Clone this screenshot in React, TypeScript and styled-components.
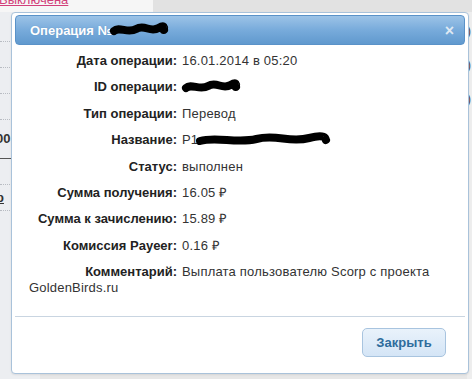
import styled, { createGlobalStyle } from "styled-components";

const GlobalStyle = createGlobalStyle`
  html, body {
    margin: 0;
    padding: 0;
    background: #e7e7e7;
  }
  body {
    font-family: "Liberation Sans", Arial, sans-serif;
    font-size: 13px;
    color: #222;
  }
`;

const Page = styled.div`
  position: relative;
  width: 472px;
  height: 379px;
  overflow: hidden;
  display: flex;
  flex-direction: column;
`;

const TopStrip = styled.div`
  display: flex;
  height: 12px;
  flex: none;
`;

const TopCell = styled.div<{ $width?: number; $bg: string }>`
  width: ${(p) => (p.$width ? `${p.$width}px` : "auto")};
  flex: ${(p) => (p.$width ? "none" : "1")};
  background: ${(p) => p.$bg};
  overflow: hidden;
`;

const OffLink = styled.a`
  display: block;
  margin-top: -8px;
  margin-left: -1px;
  color: #d23f7a;
  font-size: 13px;
  line-height: 16px;
  text-decoration: underline;
`;

const Backdrop = styled.div`
  flex: 1;
  display: flex;
  justify-content: space-between;
`;

const SideColumn = styled.div`
  width: 40px;
  background: #eceef1;
  padding-top: 4px;
`;

const SideRow = styled.div<{ $solid?: boolean; $tall?: boolean }>`
  height: ${(p) => (p.$tall ? 38 : 25)}px;
  border-bottom: 1px ${(p) => (p.$solid ? "solid #555" : "dotted #b8bcc2")};
  font-size: 13px;
  font-weight: bold;
  line-height: ${(p) => (p.$tall ? 38 : 25)}px;
  color: #333;
  overflow: hidden;
  white-space: nowrap;
`;

const SideText = styled.span<{ $link?: boolean }>`
  display: inline-block;
  margin-left: -4px;
  text-decoration: ${(p) => (p.$link ? "underline" : "none")};
`;

const EdgeColumn = styled.div`
  width: 5px;
  background: #eeeeee;
  padding-top: 2px;
  font-size: 12px;
  line-height: 34px;
  color: #444;
  overflow: hidden;
`;

const Dialog = styled.div`
  position: absolute;
  left: 11px;
  top: 12px;
  width: 450px;
  height: 355px;
  padding: 2px 3px 3px;
  background: #fff;
  border: 1px solid #a9c2da;
  border-radius: 4px;
  display: flex;
  flex-direction: column;
  box-shadow: 0 1px 2px rgba(0, 0, 0, 0.08);
`;

const TitleBar = styled.div`
  height: 28px;
  flex: none;
  display: flex;
  align-items: center;
  justify-content: space-between;
  padding: 0 10px 0 14px;
  background: linear-gradient(#9cc3e7, #78abdb 50%, #6099ce);
  border: 1px solid #5a92c8;
  border-radius: 4px;
  color: #fff;
  font-weight: bold;
  font-size: 13px;
`;

const Title = styled.span`
  display: flex;
  align-items: center;
  text-shadow: 0 0 1px rgba(40, 80, 130, 0.3);
`;

const Scribble = styled.svg`
  display: inline-block;
  vertical-align: -1px;
  overflow: visible;
`;

const CloseButton = styled.span`
  color: #dfe9f3;
  font-size: 16px;
  font-weight: bold;
  line-height: 1;
  margin-top: 2px;
`;

const Content = styled.div`
  flex: 1;
  padding: 3px 14px 0;
`;

const Row = styled.div`
  padding: 5px 0 5.4px;
  line-height: 16px;
`;

const Label = styled.span`
  display: inline-block;
  width: 148px;
  text-align: right;
  font-weight: bold;
  color: #222;
`;

const Value = styled.span`
  margin-left: 5px;
  color: #333;
  letter-spacing: 0.2px;
`;

const ButtonPane = styled.div`
  flex: none;
  border-top: 1px solid #c9d5e1;
  display: flex;
  justify-content: flex-end;
  padding: 11px 19px 13px 0;
`;

const Button = styled.button`
  width: 84px;
  height: 29px;
  background: linear-gradient(#e9f2fb, #d4e5f6);
  border: 1px solid #a8c4df;
  border-radius: 5px;
  color: #2e6c9c;
  font-family: "Liberation Sans", Arial, sans-serif;
  font-size: 13px;
  font-weight: bold;
  cursor: pointer;
`;

function Blot({ width, offset = 0 }: { width: number; offset?: number }) {
  const w = width;
  return (
    <Scribble
      width={w}
      height="10"
      viewBox={`0 0 ${w} 10`}
      style={{ marginLeft: offset }}
    >
      <path
        d={`M3 6 C ${w * 0.15} 1, ${w * 0.3} 9, ${w * 0.45} 4 S ${
          w * 0.7
        } 8, ${w * 0.85} 3 S ${w - 4} 6, ${w - 3} 5`}
        stroke="#000"
        strokeWidth="8"
        strokeLinecap="round"
        strokeLinejoin="round"
        fill="none"
      />
    </Scribble>
  );
}

const rows: { label: string; value: React.ReactNode }[] = [
  { label: "Дата операции:", value: "16.01.2014 в 05:20" },
  { label: "ID операции:", value: <Blot width={56} offset={1} /> },
  { label: "Тип операции:", value: "Перевод" },
  {
    label: "Название:",
    value: (
      <>
        P1
        <Blot width={132} offset={-1} />
      </>
    ),
  },
  { label: "Статус:", value: "выполнен" },
  { label: "Сумма получения:", value: "16.05 ₽" },
  { label: "Сумма к зачислению:", value: "15.89 ₽" },
  { label: "Комиссия Payeer:", value: "0.16 ₽" },
  {
    label: "Комментарий:",
    value: "Выплата пользователю Scorp с проекта GoldenBirds.ru",
  },
];

export default function App() {
  return (
    <>
      <GlobalStyle />
      <Page>
        <TopStrip>
          <TopCell $width={153} $bg="#f6f6f6">
            <OffLink>Выключена</OffLink>
          </TopCell>
          <TopCell $bg="#e2e2e2" />
        </TopStrip>
        <Backdrop>
          <SideColumn>
            <SideRow />
            <SideRow />
            <SideRow />
            <SideRow />
            <SideRow $solid $tall>
              <SideText>00</SideText>
            </SideRow>
            <SideRow />
            <SideRow>
              <SideText $link>р</SideText>
            </SideRow>
          </SideColumn>
          <EdgeColumn>
            )<br />)<br />)
          </EdgeColumn>
        </Backdrop>

        <Dialog>
          <TitleBar>
            <Title>
              Операция №
              <Blot width={56} offset={-1} />
            </Title>
            <CloseButton>×</CloseButton>
          </TitleBar>
          <Content>
            {rows.map((r) => (
              <Row key={r.label}>
                <Label>{r.label}</Label>
                <Value>{r.value}</Value>
              </Row>
            ))}
          </Content>
          <ButtonPane>
            <Button>Закрыть</Button>
          </ButtonPane>
        </Dialog>
      </Page>
    </>
  );
}
